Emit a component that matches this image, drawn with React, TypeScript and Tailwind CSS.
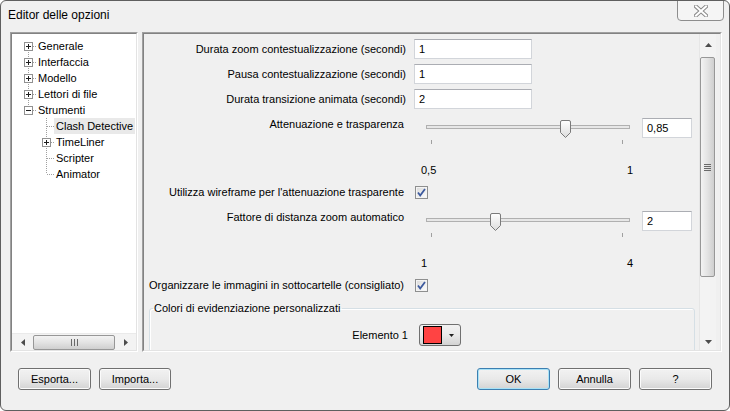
import React from "react"

type TreeItem = {
  label: string
  level: 0 | 1
  box?: "+" | "-"
  top: boolean
  bottom: boolean
  selected?: boolean
}

const treeItems: TreeItem[] = [
  { label: "Generale", level: 0, box: "+", top: false, bottom: true },
  { label: "Interfaccia", level: 0, box: "+", top: true, bottom: true },
  { label: "Modello", level: 0, box: "+", top: true, bottom: true },
  { label: "Lettori di file", level: 0, box: "+", top: true, bottom: true },
  { label: "Strumenti", level: 0, box: "-", top: true, bottom: false },
  { label: "Clash Detective", level: 1, top: true, bottom: true, selected: true },
  { label: "TimeLiner", level: 1, box: "+", top: true, bottom: true },
  { label: "Scripter", level: 1, top: true, bottom: true },
  { label: "Animator", level: 1, top: true, bottom: false },
]

const Gutter = ({ item }: { item: TreeItem }) => (
  <svg width="16" height="16" className="shrink-0">
    {item.top && <line x1="8.5" y1="0" x2="8.5" y2="8" stroke="#a0a0a0" strokeDasharray="1 1" />}
    {item.bottom && <line x1="8.5" y1="8" x2="8.5" y2="16" stroke="#a0a0a0" strokeDasharray="1 1" />}
    <line x1="9" y1="8.5" x2="16" y2="8.5" stroke="#a0a0a0" strokeDasharray="1 1" />
    {item.box && (
      <>
        <rect x="4.5" y="4.5" width="8" height="8" fill="#ffffff" stroke="#919191" />
        <line x1="6" y1="8.5" x2="11" y2="8.5" stroke="#1e1e1e" />
        {item.box === "+" && <line x1="8.5" y1="6" x2="8.5" y2="11" stroke="#1e1e1e" />}
      </>
    )}
  </svg>
)

const Arrow = ({ dir }: { dir: "up" | "down" | "left" | "right" }) => {
  const pts = {
    up: "0,4 7,4 3.5,0",
    down: "0,0 7,0 3.5,4",
    left: "4,0 4,7 0,3.5",
    right: "0,0 0,7 4,3.5",
  }[dir]
  const vertical = dir === "up" || dir === "down"
  return (
    <svg width={vertical ? 7 : 4} height={vertical ? 4 : 7}>
      <polygon points={pts} fill="#4d4d4d" />
    </svg>
  )
}

const TextBox = ({ value, className }: { value: string; className: string }) => (
  <div
    className={`bg-white border border-[#d2d5da] border-t-[#abadb3] flex items-center pl-[4px] ${className}`}
  >
    {value}
  </div>
)

const FieldRow = ({ label, value, className }: { label: string; value: string; className: string }) => (
  <div className={`flex items-center h-[20px] ${className}`}>
    <div className="w-[262px] text-right">{label}</div>
    <TextBox value={value} className="ml-[8px] w-[118px] h-[20px]" />
  </div>
)

const Thumb = () => (
  <svg width="11" height="18">
    <defs>
      <linearGradient id="thumbfill" x1="0" y1="0" x2="0" y2="1">
        <stop offset="0" stopColor="#ffffff" />
        <stop offset="1" stopColor="#dcdcdc" />
      </linearGradient>
    </defs>
    <path
      d="M0.5 2 Q0.5 0.5 2 0.5 H9 Q10.5 0.5 10.5 2 V12.5 L5.5 17.5 L0.5 12.5 Z"
      fill="url(#thumbfill)"
      stroke="#7a7a7a"
    />
  </svg>
)

const SliderRow = ({
  label,
  value,
  thumbLeft,
  className,
}: {
  label: string
  value: string
  thumbLeft: string
  className: string
}) => (
  <div className={`flex items-start h-[30px] ${className}`}>
    <div className="w-[262px] text-right pr-[2px] leading-[16px]">{label}</div>
    <div className="relative ml-[17px] w-[210px] h-[30px]">
      <div className="mt-[9px] mx-[3px] h-[4px] border border-[#b0b0b0] bg-[#e7e7e7]" />
      <div className="flex justify-between mt-[11px] pl-[8px] pr-[10px]">
        <div className="w-px h-[4px] bg-[#a0a0a0]" />
        <div className="w-px h-[4px] bg-[#a0a0a0]" />
      </div>
      <div className={`absolute top-[4px] ${thumbLeft}`}>
        <Thumb />
      </div>
    </div>
    <TextBox value={value} className="ml-[9px] mt-[2px] w-[50px] h-[20px]" />
  </div>
)

const ScaleRow = ({ min, max, className }: { min: string; max: string; className: string }) => (
  <div className={`flex h-[14px] leading-[14px] ${className}`}>
    <div className="w-[262px]" />
    <div className="ml-[15px] w-[212px] flex justify-between">
      <span>{min}</span>
      <span>{max}</span>
    </div>
  </div>
)

const CheckBox = () => (
  <svg width="13" height="13" className="shrink-0">
    <defs>
      <linearGradient id="chk" x1="0" y1="0" x2="1" y2="1">
        <stop offset="0" stopColor="#dcdcdc" />
        <stop offset="1" stopColor="#fbfbfb" />
      </linearGradient>
    </defs>
    <rect x="0.5" y="0.5" width="12" height="12" fill="#f4f4f4" stroke="#8e8f8f" />
    <rect x="2" y="2" width="9" height="9" fill="url(#chk)" />
    <path d="M3 6.5 L5.2 9.5 L10 3" fill="none" stroke="#3d5a9e" strokeWidth="1.8" />
  </svg>
)

const CheckRow = ({ label, className }: { label: string; className: string }) => (
  <div className={`flex items-center h-[16px] ${className}`}>
    <div className="w-[262px] text-right pr-[2px]">{label}</div>
    <div className="ml-[9px]">
      <CheckBox />
    </div>
  </div>
)

const WinButton = ({ label, className, isDefault }: { label: string; className: string; isDefault?: boolean }) => (
  <div
    className={`h-[22px] rounded-[3px] border flex items-center justify-center bg-linear-to-b from-[#f2f2f2] via-[#e9e9e9] to-[#d3d3d3] ${
      isDefault
        ? "border-[#3c7fb1] shadow-[inset_0_0_0_1px_#a8e2f7]"
        : "border-[#707070] shadow-[inset_0_0_0_1px_#fbfbfb]"
    } ${className}`}
  >
    {label}
  </div>
)

export default function App() {
  return (
    <div className="w-[730px] h-[411px] bg-[#f0f0f0] border border-[#5f5f5f] rounded-[6px] flex flex-col relative overflow-hidden text-[11px] text-black font-['Liberation_Sans',Arial,sans-serif]">
      {/* title */}
      <div className="h-[31px] shrink-0 flex items-center pl-[7px] pb-[3px] text-[12px]">
        Editor delle opzioni
      </div>
      <div className="absolute top-[-1px] right-[5px] w-[47px] h-[21px] border border-[#8d8d8d] rounded-b-[4px] bg-[#f5f5f5] flex items-center justify-center">
        <svg width="14" height="12">
          <path d="M2 1.5 L12 10.5 M12 1.5 L2 10.5" stroke="#8a8a8a" strokeWidth="4" strokeLinecap="square" />
          <path d="M2 1.5 L12 10.5 M12 1.5 L2 10.5" stroke="#ffffff" strokeWidth="2" strokeLinecap="square" />
        </svg>
      </div>

      {/* main area */}
      <div className="flex h-[320px] pl-[9px] shrink-0">
        {/* tree panel */}
        <div className="w-[128px] h-full border border-[#a0a0a0] border-b-[#ffffff] border-r-[#ffffff]">
          <div className="w-full h-full border border-[#828282] border-b-[#e3e3e3] border-r-[#e3e3e3] bg-white flex flex-col">
            <div className="flex-1 pt-[4px]">
              {treeItems.map((item) => (
                <div
                  key={item.label}
                  className={`flex items-center h-[16px] ${item.level === 0 ? "pl-[8px]" : "pl-[26px]"}`}
                >
                  <Gutter item={item} />
                  <span
                    className={`px-[2px] leading-[16px] whitespace-nowrap ${item.selected ? "bg-[#e9e9e9]" : ""}`}
                  >
                    {item.label}
                  </span>
                </div>
              ))}
            </div>
            <div className="h-[17px] flex items-center bg-[#f3f3f3] border-t border-[#eaeaea]">
              <div className="w-[21px] flex justify-center">
                <Arrow dir="left" />
              </div>
              <div className="w-[82px] h-[15px] rounded-[2px] border border-[#979797] bg-linear-to-b from-[#f3f3f3] via-[#e3e3e3] to-[#cfcfcf] flex items-center justify-center gap-[2px]">
                <div className="w-px h-[7px] bg-[#6a6a6a]" />
                <div className="w-px h-[7px] bg-[#6a6a6a]" />
                <div className="w-px h-[7px] bg-[#6a6a6a]" />
              </div>
              <div className="flex-1 flex justify-center">
                <Arrow dir="right" />
              </div>
            </div>
          </div>
        </div>

        {/* options panel */}
        <div className="ml-[4px] w-[580px] h-full border border-[#a0a0a0] border-b-[#ffffff] border-r-[#ffffff]">
          <div className="w-full h-full border border-[#828282] border-b-[#e3e3e3] border-r-[#e3e3e3] flex">
            <div className="flex-1 overflow-hidden flex flex-col pt-[5px]">
              <FieldRow label="Durata zoom contestualizzazione (secondi)" value="1" className="" />
              <FieldRow label="Pausa contestualizzazione (secondi)" value="1" className="mt-[5px]" />
              <FieldRow label="Durata transizione animata (secondi)" value="2" className="mt-[5px]" />
              <SliderRow label="Attenuazione e trasparenza" value="0,85" thumbLeft="left-[137px]" className="mt-[7px]" />
              <ScaleRow min="0,5" max="1" className="mt-[17px]" />
              <CheckRow label="Utilizza wireframe per l'attenuazione trasparente" className="mt-[7px]" />
              <SliderRow label="Fattore di distanza zoom automatico" value="2" thumbLeft="left-[67px]" className="mt-[9px]" />
              <ScaleRow min="1" max="4" className="mt-[17px]" />
              <CheckRow label="Organizzare le immagini in sottocartelle (consigliato)" className="mt-[7px]" />
              <fieldset className="ml-[5px] mt-[7px] w-[546px] shrink-0 border border-[#d5dfe5] rounded-[3px] shadow-[inset_1px_1px_0_#ffffff]">
                <legend className="ml-[3px] px-[1px] leading-[16px]">Colori di evidenziazione personalizzati</legend>
                <div className="flex items-center mt-[8px] h-[22px]">
                  <div className="w-[258px] text-right">Elemento 1</div>
                  <div className="ml-[11px] w-[42px] h-[22px] rounded-[3px] border border-[#707070] bg-linear-to-b from-[#f2f2f2] via-[#e9e9e9] to-[#d3d3d3] flex items-center">
                    <div className="ml-[3px] w-[19px] h-[18px] border border-black bg-[#ff4343]" />
                    <div className="ml-[7px]">
                      <svg width="5" height="3">
                        <polygon points="0,0 5,0 2.5,3" fill="#202020" />
                      </svg>
                    </div>
                  </div>
                </div>
                <div className="h-[20px]" />
              </fieldset>
            </div>
            {/* vertical scrollbar */}
            <div className="w-[17px] mr-[4px] flex flex-col bg-[#f3f3f3] border-l border-[#e6e6e6]">
              <div className="h-[22px] flex items-center justify-center shrink-0">
                <Arrow dir="up" />
              </div>
              <div className="flex-1 pt-[1px]">
                <div className="h-[220px] w-[15px] rounded-[2px] border border-[#979797] bg-linear-to-r from-[#f3f3f3] via-[#e3e3e3] to-[#cfcfcf] flex flex-col items-center justify-center gap-[1px]">
                  <div className="w-[7px] h-px bg-[#6a6a6a]" />
                  <div className="w-[7px] h-px bg-[#6a6a6a]" />
                  <div className="w-[7px] h-px bg-[#6a6a6a]" />
                  <div className="w-[7px] h-px bg-[#6a6a6a]" />
                </div>
              </div>
              <div className="h-[17px] flex items-center justify-center shrink-0">
                <Arrow dir="down" />
              </div>
            </div>
          </div>
        </div>
      </div>

      {/* buttons */}
      <div className="flex mt-[16px] pl-[17px] pr-[17px]">
        <WinButton label="Esporta..." className="w-[73px]" />
        <WinButton label="Importa..." className="ml-[8px] w-[72px]" />
        <div className="flex-1" />
        <WinButton label="OK" className="w-[73px]" isDefault />
        <WinButton label="Annulla" className="ml-[8px] w-[73px]" />
        <WinButton label="?" className="ml-[8px] w-[73px]" />
      </div>
    </div>
  )
}
